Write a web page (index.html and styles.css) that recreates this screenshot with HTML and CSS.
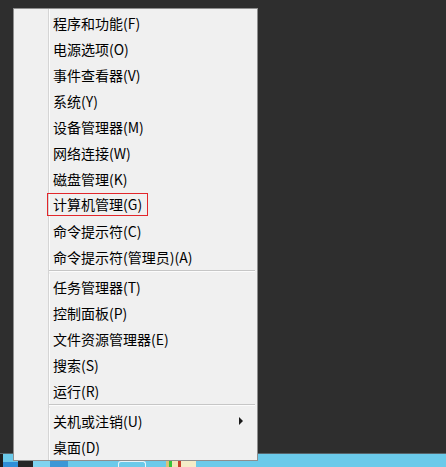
FILE: index.html
```html
<!DOCTYPE html>
<html lang="zh-CN">

<head>
    <meta charset="UTF-8" />
    <title>Win+X 菜单</title>
    <link rel="stylesheet" href="styles.css">
</head>

<body>
    <div class="screen">
        <div class="desktop"></div>
        <!-- 任务栏 -->
        <div class="taskbar">
            <span class="start"></span>
            <span class="tb tb-blue"></span>
            <span class="tb tb-dark"></span>
            <span class="tb tb-light"></span>
            <span class="tb tb-mid"></span>
            <span class="tb tb-pill"></span>
            <span class="tb tb-folder"></span>
        </div>

        <!-- 右键菜单 -->
        <ul class="menu">
            <li>程序和功能(F)</li>
            <li>电源选项(O)</li>
            <li>事件查看器(V)</li>
            <li>系统(Y)</li>
            <li>设备管理器(M)</li>
            <li>网络连接(W)</li>
            <li>磁盘管理(K)</li>
            <li><span class="mark">计算机管理(G)</span></li>
            <li>命令提示符(C)</li>
            <li>命令提示符(管理员)(A)</li>
            <li class="sep"></li>
            <li>任务管理器(T)</li>
            <li>控制面板(P)</li>
            <li>文件资源管理器(E)</li>
            <li>搜索(S)</li>
            <li>运行(R)</li>
            <li class="sep"></li>
            <li class="sub">关机或注销(U)<i class="arrow"></i></li>
            <li>桌面(D)</li>
        </ul>
    </div>
</body>

</html>
```

FILE: styles.css
```css
* {
    margin: 0;
    padding: 0;
}

ul {
    list-style: none;
}

body {
    background: #2e2e2e;
    font-family: "Noto Sans CJK SC", "Noto Sans", sans-serif;
}

.screen {
    position: relative;
    height: 467px;
    display: flex;
    flex-direction: column;
}

.desktop {
    flex: 1;
}

.taskbar {
    height: 13px;
    border-top: 1px solid #56656c;
    background: #6bcaea;
    display: flex;
    align-items: flex-end;
}

.taskbar .start {
    width: 3px;
    height: 13px;
    background: #1f1f1f;
}

.taskbar .tb {
    height: 6px;
}

.taskbar .tb-blue {
    width: 15px;
    background: #2f8fd8;
    height: 5px;
}

.taskbar .tb-dark {
    width: 15px;
    background: #262626;
}

.taskbar .tb-light {
    width: 17px;
    background: #7fd3f0;
}

.taskbar .tb-mid {
    width: 18px;
    background: #3c97d6;
}

.taskbar .tb-pill {
    width: 26px;
    height: 5px;
    margin-left: 50px;
    border: 1px solid #e8f4fa;
    border-bottom: none;
    border-radius: 3px 3px 0 0;
}

.taskbar .tb-folder {
    width: 30px;
    height: 6px;
    margin-left: 20px;
    background: linear-gradient(90deg, #d8c27a 0 3px, #34c43a 3px 6px, #f2e6b8 6px 12px, #c8402c 12px 15px, #f4ecc8 15px);
}

/* 菜单 */
.menu {
    position: absolute;
    left: 13px;
    top: 8px;
    width: 243px;
    padding-top: 1px;
    border: 1px solid #8e8e8e;
    background: linear-gradient(90deg, #f0f0f0 0 34px, #d5d5d5 34px 35px, #fcfcfc 35px 36px, #f0f0f0 36px);
    font-size: 14px;
    color: #000;
}

.menu li {
    height: 26px;
    line-height: 26px;
    padding-left: 39px;
    white-space: nowrap;
}

.menu .sep {
    height: 4px;
    padding: 0;
    margin: 0 2px 0 35px;
    border-top: 1px solid #c6c6c6;
    box-sizing: border-box;
    background: linear-gradient(#fcfcfc 0 1px, #f0f0f0 1px);
}

.menu .mark {
    display: inline-block;
    margin-left: -6px;
    padding: 0 5px;
    height: 21px;
    line-height: 21px;
    border: 1px solid #e2262b;
    vertical-align: top;
    margin-top: 1px;
}

.menu .sub {
    display: flex;
    align-items: center;
    justify-content: space-between;
    padding-right: 14px;
}

.menu .arrow {
    width: 0;
    height: 0;
    border-left: 4px solid #1a1a1a;
    border-top: 4px solid transparent;
    border-bottom: 4px solid transparent;
}
```
